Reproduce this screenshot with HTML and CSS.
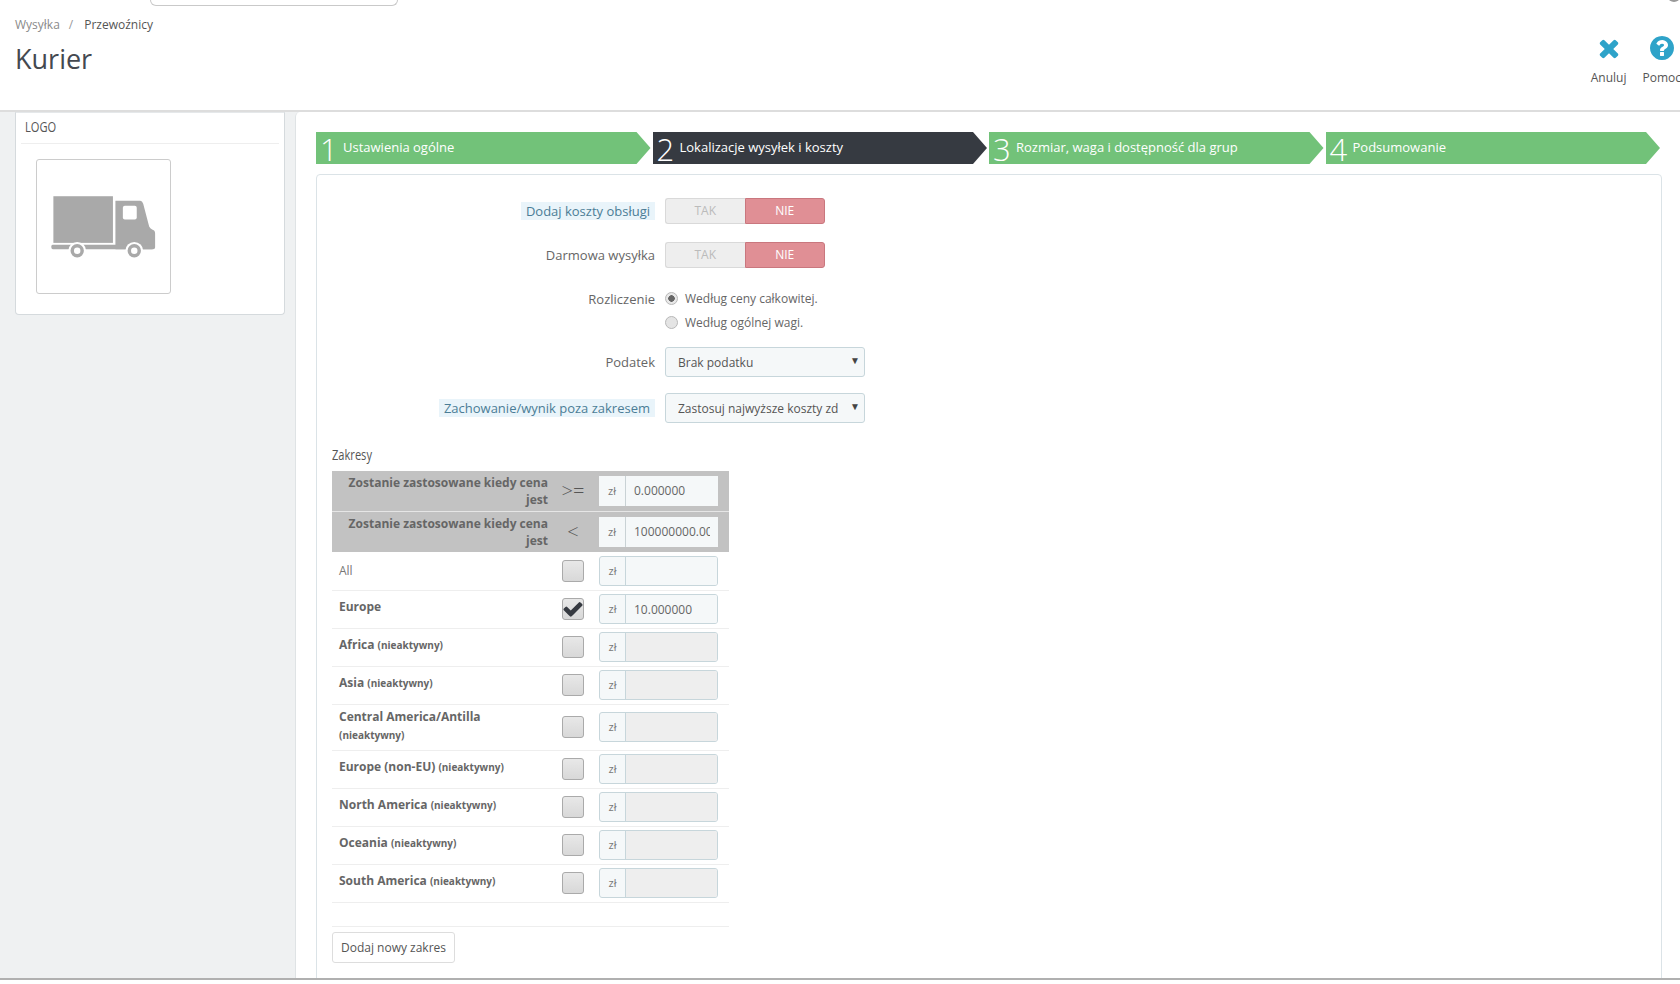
FILE: index.html
```html
<!DOCTYPE html>
<html lang="pl">
<head>
<meta charset="utf-8">
<title>Kurier</title>
<link rel="stylesheet" href="styles.css">
</head>
<body>
<div class="page">
  <header class="topbar">
    <div class="corner-stub"></div>
    <div class="top-left">
      <div class="search-stub"></div>
      <nav class="breadcrumb"><span class="crumb-muted">Wysyłka</span><span class="crumb-sep">/</span><span>Przewoźnicy</span></nav>
      <h1 class="title">Kurier</h1>
    </div>
    <div class="actions">
      <div class="action">
        <svg class="action-icon" viewBox="0 0 1792 1792"><path d="M1490 1322q0 40-28 68l-136 136q-28 28-68 28t-68-28l-294-294-294 294q-28 28-68 28t-68-28l-136-136q-28-28-28-68t28-68l294-294-294-294q-28-28-28-68t28-68l136-136q28-28 68-28t68 28l294 294 294-294q28-28 68-28t68 28l136 136q28 28 28 68t-28 68l-294 294 294 294q28 28 28 68z"/></svg>
        <span>Anuluj</span>
      </div>
      <div class="action">
        <svg class="action-icon" viewBox="0 0 1792 1792"><path d="M1024 1376v-192q0-14-9-23t-23-9h-192q-14 0-23 9t-9 23v192q0 14 9 23t23 9h192q14 0 23-9t9-23zm256-672q0-88-55.500-163t-138.500-116-170-41q-243 0-371 213-15 24 8 42l132 100q7 6 19 6 16 0 25-12 53-68 86-92 34-24 86-24 48 0 85.500 26t37.500 59q0 38-20 61t-68 45q-63 28-115.500 86.500t-52.500 125.500v36q0 14 9 23t23 9h192q14 0 23-9t9-23q0-19 21.500-49.500t54.500-49.500q32-18 49-28.500t46-35 44.500-48 28-60.500 12.500-81zm384 192q0 209-103 385.500t-279.500 279.500-385.500 103-385.500-103-279.500-279.500-103-385.500 103-385.500 279.500-279.500 385.500-103 385.500 103 279.500 279.500 103 385.500z"/></svg>
        <span>Pomoc</span>
      </div>
    </div>
  </header>

  <div class="main">
    <aside class="sidebar">
      <section class="logo-panel">
        <h3 class="logo-head"><span class="narrow">LOGO</span></h3>
        <div class="logo-box">
          <svg class="truck" viewBox="1 1 134 134">
            <rect x="17.500" y="37.500" width="60" height="47" fill="#a9a9a9"/>
            <path d="M80 42h25q2 0 3 3l6 23q1 2 3 3l2 1q1 1 1 3v14q0 2-2 2H80z" fill="#a9a9a9"/>
            <rect x="15.500" y="86.500" width="103" height="4.500" rx="1.500" fill="#a9a9a9"/>
            <rect x="87.500" y="47" width="14" height="14" rx="2" fill="#fff"/>
            <circle cx="41.500" cy="92.500" r="9" fill="#fff"/>
            <circle cx="99" cy="92.500" r="9" fill="#fff"/>
            <circle cx="41.500" cy="92.500" r="5" fill="#fff" stroke="#a9a9a9" stroke-width="3.500"/>
            <circle cx="99" cy="92.500" r="5" fill="#fff" stroke="#a9a9a9" stroke-width="3.500"/>
          </svg>
        </div>
      </section>
    </aside>

    <main class="content">
      <ol class="steps">
        <li class="step"><span class="step-num">1</span><span class="step-text">Ustawienia ogólne</span></li>
        <li class="step step-active"><span class="step-num">2</span><span class="step-text">Lokalizacje wysyłek i koszty</span></li>
        <li class="step"><span class="step-num">3</span><span class="step-text">Rozmiar, waga i dostępność dla grup</span></li>
        <li class="step"><span class="step-num">4</span><span class="step-text">Podsumowanie</span></li>
      </ol>

      <form class="form-panel">
        <div class="form-row">
          <div class="form-label"><span class="hint">Dodaj koszty obsługi</span></div>
          <div class="toggle"><span class="toggle-off">TAK</span><span class="toggle-on">NIE</span></div>
        </div>
        <div class="form-row">
          <div class="form-label">Darmowa wysyłka</div>
          <div class="toggle"><span class="toggle-off">TAK</span><span class="toggle-on">NIE</span></div>
        </div>
        <div class="form-row form-row-radio">
          <div class="form-label">Rozliczenie</div>
          <div class="radios">
            <label class="radio-line"><input class="radio" type="radio" name="billing" checked>Według ceny całkowitej.</label>
            <label class="radio-line"><input class="radio" type="radio" name="billing">Według ogólnej wagi.</label>
          </div>
        </div>
        <div class="form-row form-row-select">
          <div class="form-label">Podatek</div>
          <div class="select-wrap"><select class="select"><option>Brak podatku</option></select></div>
        </div>
        <div class="form-row">
          <div class="form-label"><span class="hint">Zachowanie/wynik poza zakresem</span></div>
          <div class="select-wrap"><select class="select"><option>Zastosuj najwyższe koszty zdefiniowane</option></select></div>
        </div>

        <h4 class="ranges-title"><span class="narrow">Zakresy</span></h4>
        <table class="ranges">
          <colgroup><col class="col-name"><col class="col-sign"><col class="col-input"></colgroup>
          <tr class="range-head">
            <th>Zostanie zastosowane kiedy cena jest</th>
            <td class="sign">&gt;=</td>
            <td><div class="price"><span class="addon">zł</span><input class="price-input" value="0.000000"></div></td>
          </tr>
          <tr class="range-head range-head-2">
            <th>Zostanie zastosowane kiedy cena jest</th>
            <td class="sign">&lt;</td>
            <td><div class="price"><span class="addon">zł</span><input class="price-input" value="100000000.00"></div></td>
          </tr>
          <tr class="zone">
            <td class="zone-plain">All</td>
            <td><span class="check"></span></td>
            <td><div class="price"><span class="addon">zł</span><input class="price-input"></div></td>
          </tr>
          <tr class="zone">
            <td><div class="zone-name"><b>Europe</b></div></td>
            <td><span class="check"><svg class="check-mark" viewBox="0 0 1792 1792"><path d="M1671 566q0 40-28 68l-724 724-136 136q-28 28-68 28t-68-28l-136-136-362-362q-28-28-28-68t28-68l136-136q28-28 68-28t68 28l294 295 656-657q28-28 68-28t68 28l136 136q28 28 28 68z"/></svg></span></td>
            <td><div class="price"><span class="addon">zł</span><input class="price-input" value="10.000000"></div></td>
          </tr>
          <tr class="zone">
            <td><div class="zone-name"><b>Africa</b> <small>(nieaktywny)</small></div></td>
            <td><span class="check"></span></td>
            <td><div class="price price-off"><span class="addon">zł</span><input class="price-input" disabled></div></td>
          </tr>
          <tr class="zone">
            <td><div class="zone-name"><b>Asia</b> <small>(nieaktywny)</small></div></td>
            <td><span class="check"></span></td>
            <td><div class="price price-off"><span class="addon">zł</span><input class="price-input" disabled></div></td>
          </tr>
          <tr class="zone zone-tall">
            <td><div class="zone-name"><b>Central America/Antilla</b><br><small>(nieaktywny)</small></div></td>
            <td><span class="check"></span></td>
            <td><div class="price price-off"><span class="addon">zł</span><input class="price-input" disabled></div></td>
          </tr>
          <tr class="zone">
            <td><div class="zone-name"><b>Europe (non-EU)</b> <small>(nieaktywny)</small></div></td>
            <td><span class="check"></span></td>
            <td><div class="price price-off"><span class="addon">zł</span><input class="price-input" disabled></div></td>
          </tr>
          <tr class="zone">
            <td><div class="zone-name"><b>North America</b> <small>(nieaktywny)</small></div></td>
            <td><span class="check"></span></td>
            <td><div class="price price-off"><span class="addon">zł</span><input class="price-input" disabled></div></td>
          </tr>
          <tr class="zone">
            <td><div class="zone-name"><b>Oceania</b> <small>(nieaktywny)</small></div></td>
            <td><span class="check"></span></td>
            <td><div class="price price-off"><span class="addon">zł</span><input class="price-input" disabled></div></td>
          </tr>
          <tr class="zone">
            <td><div class="zone-name"><b>South America</b> <small>(nieaktywny)</small></div></td>
            <td><span class="check"></span></td>
            <td><div class="price price-off"><span class="addon">zł</span><input class="price-input" disabled></div></td>
          </tr>
        </table>
        <div class="ranges-foot"><button class="add-btn" type="button">Dodaj nowy zakres</button></div>
      </form>
    </main>
  </div>
  <div class="bottom-strip"></div>
</div>
</body>
</html>
```
FILE: styles.css
```css
* { box-sizing: border-box; }
html, body { margin: 0; height: 100%; overflow: hidden; background: #fff; }
body { font-family: "Open Sans", "Liberation Sans", sans-serif; font-size: 13px; color: #666; }
.page { display: flex; flex-direction: column; height: 984px; width: 1680px; overflow: hidden; }

/* top bar */
.topbar { position: relative; flex: none; height: 112px; display: flex; justify-content: space-between; border-bottom: 2px solid #ddd; overflow: hidden; background: #fff; }
.corner-stub { position: absolute; right: 0; top: -8px; width: 12px; height: 10px; border-radius: 50%; background: #999; }
.top-left { display: flex; flex-direction: column; padding-left: 15px; }
.search-stub { width: 248px; height: 6px; margin-left: 135px; border: 1px solid #c9c9c9; border-top: 0; border-radius: 0 0 12px 12px; }
.breadcrumb { margin-top: 10px; font-size: 12px; line-height: 18px; color: #555; display: flex; }
.crumb-muted { color: #8a8a8a; }
.crumb-sep { margin: 0 11px 0 9px; color: #999; }
.title { margin: 7px 0 0; font-size: 27px; line-height: 36px; font-weight: 400; color: #444950; }
.actions { display: flex; gap: 16px; margin-right: -1px; padding-top: 35px; }
.action { display: flex; flex-direction: column; align-items: center; font-size: 12px; line-height: 18px; color: #555; }
.action-icon { width: 28px; height: 28px; fill: #2ea3c9; margin-bottom: 7px; margin-top: -1px; }

/* body */
.main { flex: none; height: 866px; display: flex; overflow: hidden; background: #eff1f2; }
.sidebar { flex: none; width: 295px; padding-left: 15px; }
.logo-panel { width: 270px; height: 203px; background: #fff; border: 1px solid #d5dadd; border-top-color: #e5e8ea; border-radius: 0 0 4px 4px; padding: 0 5px; }
.logo-head { margin: 0; height: 31px; padding: 2px 4px 0; font-size: 15px; line-height: 22px; font-weight: 400; color: #555; border-bottom: 1px solid #eee; }
.narrow { display: inline-block; transform: scaleX(.74); transform-origin: left center; }
.logo-box { width: 135px; height: 135px; margin: 15px 0 0 15px; border: 1px solid #ccc; border-radius: 3px; background: #fff; }
.truck { display: block; width: 133px; height: 133px; }

.content { flex: 1; min-width: 0; background: #fff; border-left: 1px solid #dfe3e5; border-radius: 5px 0 0 0; padding: 20px 20px 0 20px; }
.steps { list-style: none; margin: 0; padding: 0; display: grid; grid-template-columns: repeat(4, 1fr); column-gap: 2px; }
.step { height: 32px; display: flex; align-items: center; padding-left: 4px; background: #72c279; color: #fff; font-size: 13px; clip-path: polygon(0 0, calc(100% - 14px) 0, 100% 50%, calc(100% - 14px) 100%, 0 100%); }
.step-active { background: #363a41; }
.step-num { font-size: 31px; font-weight: 300; line-height: 32px; width: 23px; padding-top: 1px; }
.step-text { padding-bottom: 2px; }

.form-panel { margin: 10px -2px 0 0; height: 820px; border: 1px solid #dbe3e7; border-radius: 4px; padding: 23px 0 0 15px; background: #fff; }
.form-row { display: grid; grid-template-columns: 323px auto; column-gap: 10px; justify-content: start; align-items: center; margin-bottom: 18px; }
.form-row-radio { margin-top: 19px; margin-bottom: 14px; }
.form-row-radio .form-label { align-self: start; line-height: 22px; padding-top: 1px; }
.form-row-select { margin-bottom: 16px; }
.form-label { text-align: right; color: #666; line-height: 18px; }
.hint { display: inline-block; padding: 0 5px; background: #e9f4fa; color: #4b7d96; }
.toggle { display: flex; width: 160px; height: 26px; font-size: 12px; line-height: 24px; text-align: center; }
.toggle-off { flex: 1; background: #eee; border: 1px solid #d9d9d9; border-right: 0; border-radius: 3px 0 0 3px; color: #bbb; }
.toggle-on { flex: 1; background: #e08f95; border: 1px solid #c9777e; border-radius: 0 3px 3px 0; color: #fff; }
.radios { display: flex; flex-direction: column; gap: 2px; }
.radio-line { display: flex; align-items: center; height: 22px; font-size: 12px; color: #666; }
.radio { appearance: none; width: 13px; height: 13px; margin: 0 7px 0 0; border-radius: 50%; border: 1px solid #b8b8b8; background: #e4e4e4; }
.radio:checked { background: radial-gradient(circle, #666 0 3px, #e8e8e8 3.5px); }
.select-wrap { position: relative; width: 200px; }
.select-wrap::after { content: "▼"; position: absolute; top: 7px; right: 5px; font-size: 10px; line-height: 12px; color: #444; pointer-events: none; }
.select { appearance: none; display: block; width: 100%; height: 30px; padding: 1px 26px 0 12px; font-family: inherit; font-size: 12px; color: #555; background: #f5f8f9; border: 1px solid #c7d6db; border-radius: 3px; }

.ranges-title { margin: 0; padding-top: 3px; height: 30px; font-size: 15px; line-height: 20px; font-weight: 400; color: #555; }
.ranges { width: 397px; table-layout: fixed; border-collapse: collapse; }
.col-name { width: 221px; }
.col-sign { width: 40px; }
.col-input { width: 136px; }
.ranges td, .ranges th { padding: 0; }
.range-head { height: 40px; background: #c2c2c2; border-bottom: 1px solid #e6e6e6; }
.range-head-2 { height: 41px; border-bottom: 0; }
.range-head th { padding-left: 11px; padding-right: 5px; font-size: 12px; line-height: 17px; font-weight: 700; text-align: right; color: #666; }
.sign { font-size: 20px; font-weight: 300; text-align: center; color: #555; }
.zone { height: 38px; border-bottom: 1px solid #eee; }
.zone-tall { height: 46px; }
.zone > td:first-child { padding-left: 7px; }
.zone > td:nth-child(2) { text-align: center; }
.zone-plain { font-size: 12px; color: #777; }
.zone-name { font-size: 12px; line-height: 18px; color: #666; padding-bottom: 4px; }
.zone-name small { font-size: 10px; font-weight: 700; }
.zone-tall .zone-name { padding-bottom: 2px; }
.check { display: inline-flex; align-items: center; justify-content: center; vertical-align: middle; width: 22px; height: 22px; border: 1px solid #aaa; border-radius: 3px; background: linear-gradient(#e8e8e8, #d8d8d8); }
.check-mark { flex: none; width: 22px; height: 22px; fill: #363a41; }
.price { display: flex; width: 119px; height: 30px; margin-left: 6px; border: 1px solid #c7d6db; border-radius: 3px; background: #f5f8f9; overflow: hidden; }
.addon { flex: none; width: 26px; border-right: 1px solid #c7d6db; font-size: 11px; line-height: 28px; text-align: center; color: #777; }
.price-input { flex: 1; min-width: 0; height: 100%; padding: 0 8px; border: 0; outline: 0; font-family: inherit; font-size: 12px; color: #666; background: #f5f8f9; }
.price-off .price-input { background: #eee; }
.range-head .price { border-width: 0; border-radius: 0; background: #c9d2d5; }
.range-head .addon { line-height: 30px; margin-right: 1px; border-right: 0; background: #f5f8f9; }
.ranges-foot { width: 397px; margin-top: 23px; border-top: 1px solid #eee; padding-top: 5px; }
.add-btn { width: 123px; height: 31px; padding: 0; font-family: inherit; font-size: 12px; color: #555; background: #fff; border: 1px solid #ddd; border-radius: 3px; }

.bottom-strip { flex: 1; background: #fff; border-top: 2px solid #b0b0b0; }
```
